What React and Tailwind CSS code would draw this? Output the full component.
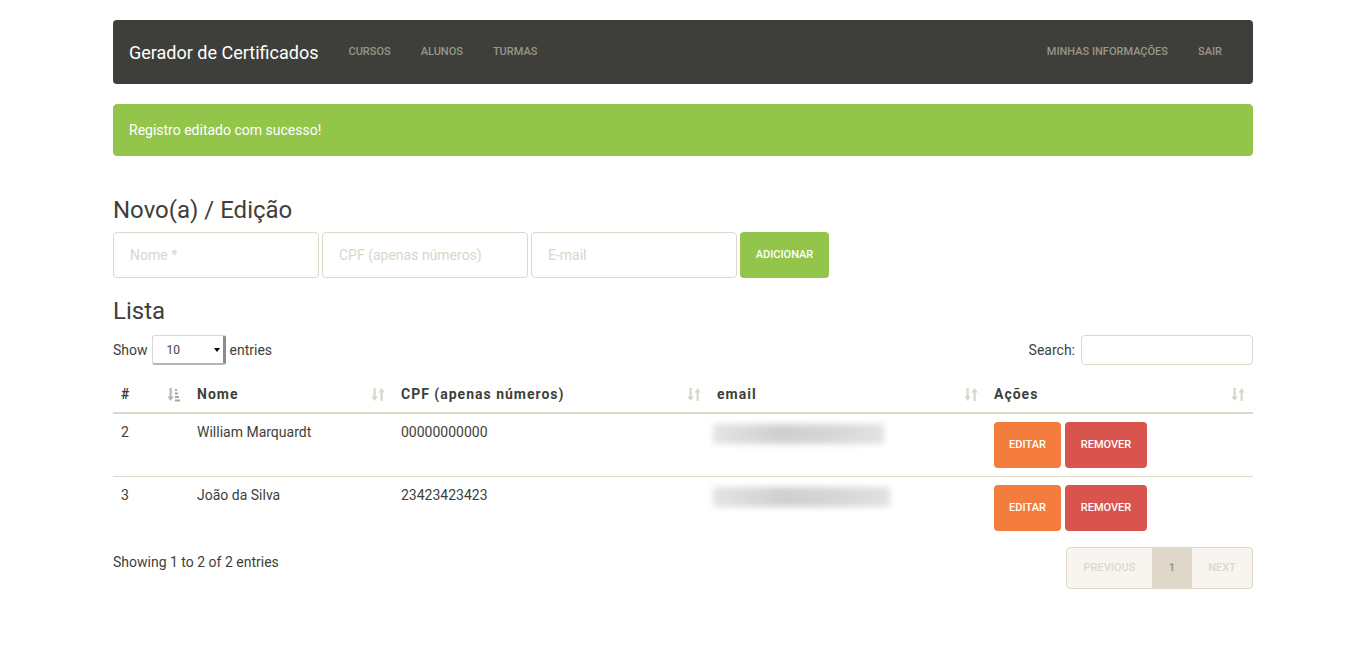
import React from "react";

function SortBoth() {
  return (
    <svg width="14" height="15" viewBox="0 0 14 15" className="shrink-0">
      <rect x="2.5" y="1" width="2.2" height="10" fill="#d9d5cd" />
      <polygon points="0.5,9.5 6.7,9.5 3.6,14" fill="#d9d5cd" />
      <rect x="9.5" y="4" width="2.2" height="10" fill="#d9d5cd" />
      <polygon points="7.5,5.5 13.7,5.5 10.6,1" fill="#d9d5cd" />
    </svg>
  );
}

function SortAsc() {
  return (
    <svg width="14" height="15" viewBox="0 0 14 15" className="shrink-0">
      <rect x="2.5" y="1" width="2.2" height="10" fill="#b9b5ad" />
      <polygon points="0.5,9.5 6.7,9.5 3.6,14" fill="#b9b5ad" />
      <rect x="8" y="2" width="2" height="2" fill="#a9a59d" />
      <rect x="8" y="5.5" width="3" height="2" fill="#a9a59d" />
      <rect x="8" y="9" width="4" height="2" fill="#a9a59d" />
      <rect x="8" y="12.5" width="5" height="2" fill="#a9a59d" />
    </svg>
  );
}

function Th({ children, w, icon }) {
  return (
    <th className="p-0 text-left align-bottom" style={{ width: w }}>
      <div className="flex items-center justify-between px-2 h-[36px] font-bold text-[14px] tracking-[1px] text-[#3e3f3a]">
        <span>{children}</span>
        {icon}
      </div>
    </th>
  );
}

function Row({ id, name, cpf, blurW }) {
  return (
    <tr className="border-b border-[#dfd7ca] last:border-b-0">
      <td className="px-2 pt-2 pb-2 align-top leading-[20px]">{id}</td>
      <td className="px-2 pt-2 pb-2 align-top leading-[20px]">{name}</td>
      <td className="px-2 pt-2 pb-2 align-top leading-[20px]">{cpf}</td>
      <td className="pl-[4px] pr-2 pt-[10px] pb-2 align-top">
        <div className="h-[20px] bg-[linear-gradient(90deg,#e4e4e4,#cfcfcf_40%,#d6d6d6_70%,#e2e2e2)] blur-[3px]" style={{ width: blurW }} />
      </td>
      <td className="px-2 pt-2 pb-2 align-top">
        <div className="flex gap-1">
          <button className="h-[46px] w-[67px] rounded bg-[#f47c3c] text-white text-[11px] font-medium uppercase">Editar</button>
          <button className="h-[46px] w-[82px] rounded bg-[#d9534f] text-white text-[11px] font-medium uppercase">Remover</button>
        </div>
      </td>
    </tr>
  );
}

export default function App() {
  return (
    <div className="min-h-[671px] bg-white text-[#3e3f3a] text-[14px]" style={{ fontFamily: "Roboto, 'Noto Sans', sans-serif" }}>
      <div className="w-[1140px] mx-auto pt-[20px]">
        {/* Navbar */}
        <nav className="h-[64px] bg-[#3e3f3a] rounded flex items-center justify-between">
          <div className="flex items-center">
            <span className="pl-[16px] pr-[15px] text-[18px] text-white">Gerador de Certificados</span>
            {["Cursos", "Alunos", "Turmas"].map((l) => (
              <span key={l} className="px-[15px] text-[11px] font-medium uppercase text-[#98978b]">{l}</span>
            ))}
          </div>
          <div className="flex items-center pr-[16px]">
            {["Minhas informações", "Sair"].map((l) => (
              <span key={l} className="px-[15px] text-[11px] font-medium uppercase text-[#98978b]">{l}</span>
            ))}
          </div>
        </nav>

        {/* Alert */}
        <div className="mt-[20px] h-[52px] rounded bg-[#93c54b] border border-[#93c54b] px-[15px] flex items-center text-white text-[14px]">
          Registro editado com sucesso!
        </div>

        {/* Form */}
        <h3 className="mt-[41px] text-[24px] leading-[26px] font-normal">Novo(a) / Edição</h3>
        <div className="mt-[9px] flex gap-[3px]">
          {["Nome *", "CPF (apenas números)", "E-mail"].map((p) => (
            <input
              key={p}
              placeholder={p}
              className="w-[206px] h-[46px] border border-[#dfd7ca] rounded px-[16px] text-[14px] outline-none placeholder:text-[#dcd4c8]"
            />
          ))}
          <button className="w-[89px] h-[46px] rounded bg-[#93c54b] text-white text-[11px] font-medium uppercase">Adicionar</button>
        </div>

        <h3 className="mt-[20px] text-[24px] leading-[26px] font-normal">Lista</h3>

        <div className="mt-[11px] flex items-center justify-between">
          <div className="flex items-center gap-[4px]">
            <span>Show</span>
            <div className="relative w-[74px] h-[30px] border border-[#dfd7ca] rounded-[3px] border-r-[3px] border-r-[#8c8c8c] border-b-[2px] border-b-[#b5b5b5] flex items-center pl-[14px] text-[12px]">
              10
              <span className="absolute right-[3px] top-[12px] w-0 h-0 border-l-[3px] border-r-[3px] border-t-[4px] border-l-transparent border-r-transparent border-t-black" />
            </div>
            <span>entries</span>
          </div>
          <div className="flex items-center gap-[6px]">
            <span>Search:</span>
            <input className="w-[172px] h-[30px] border border-[#dfd7ca] rounded outline-none px-2" />
          </div>
        </div>

        <table className="mt-[11px] w-full table-fixed border-collapse">
          <thead>
            <tr className="border-b-2 border-[#dfd7ca]">
              <Th w={76} icon={<SortAsc />}>#</Th>
              <Th w={204} icon={<SortBoth />}>Nome</Th>
              <Th w={316} icon={<SortBoth />}>CPF (apenas números)</Th>
              <Th w={277} icon={<SortBoth />}>email</Th>
              <Th w={267} icon={<SortBoth />}>Ações</Th>
            </tr>
          </thead>
          <tbody>
            <Row id="2" name="William Marquardt" cpf="00000000000" blurW={171} />
            <Row id="3" name="João da Silva" cpf="23423423423" blurW={177} />
          </tbody>
        </table>

        <div className="mt-[8px] flex items-start justify-between">
          <span className="pt-[5px] leading-[20px]">Showing 1 to 2 of 2 entries</span>
          <div className="flex h-[42px] border border-[#dfd7ca] rounded overflow-hidden bg-[#f8f5f0] text-[11px] font-medium uppercase">
            <span className="w-[85px] flex items-center justify-center text-[#dfd7ca]">Previous</span>
            <span className="w-[40px] flex items-center justify-center bg-[#dfd7ca] text-[#8e8c84]">1</span>
            <span className="w-[60px] flex items-center justify-center text-[#dfd7ca]">Next</span>
          </div>
        </div>
      </div>
    </div>
  );
}
